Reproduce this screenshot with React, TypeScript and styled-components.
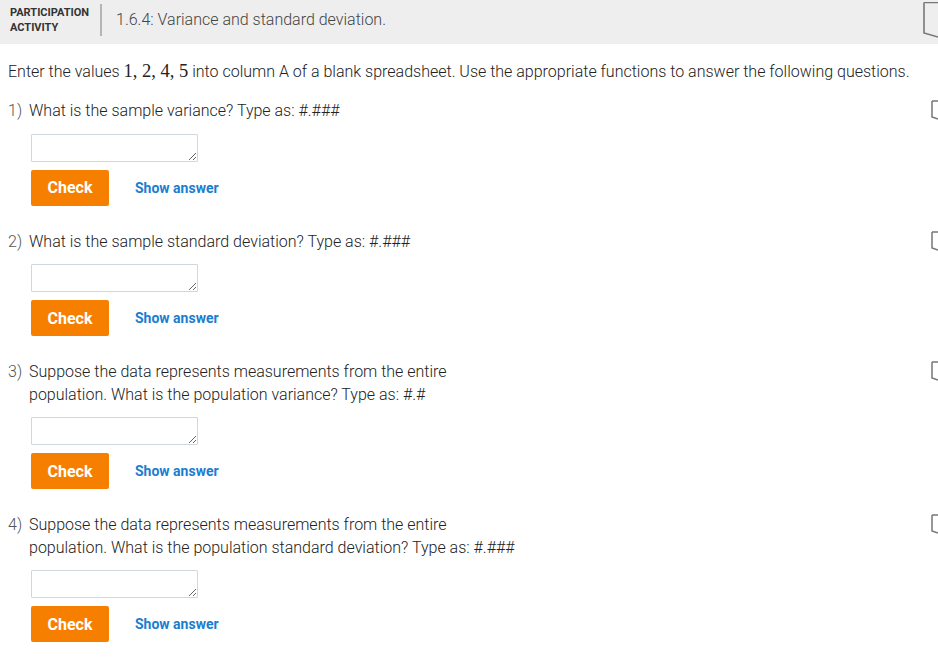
import React from "react";
import styled, { createGlobalStyle } from "styled-components";

const Global = createGlobalStyle`
  html, body { margin: 0; padding: 0; background: #fff; overflow: hidden; }
  body { font-family: Roboto, "Liberation Sans", sans-serif; }
`;

const Page = styled.div`
  width: 938px;
  overflow: hidden;
`;

const Header = styled.div`
  height: 44px;
  background: #eeeeee;
  display: flex;
  align-items: flex-start;
  box-sizing: border-box;
  padding-top: 4px;
`;

const Label = styled.div`
  font-weight: 700;
  font-size: 11px;
  line-height: 15px;
  color: #333;
  text-transform: uppercase;
  padding-left: 10px;
  width: 80px;
  padding-top: 1px;
`;

const Divider = styled.div`
  width: 2px;
  height: 32px;
  background: #b5b5b5;
  margin-left: 10px;
  margin-right: 14px;
`;

const Title = styled.div`
  font-weight: 300;
  font-size: 16px;
  color: #444;
  line-height: 20px;
  padding-top: 6px;
  flex: 1;
`;

const HeaderIcon = styled.svg`
  display: block;
  margin-top: -2px;
`;

const Body = styled.div`
  padding: 16px 0 0 8px;
  font-weight: 300;
  font-size: 16px;
  color: #222;
`;

const Intro = styled.p`
  margin: 0 0 17px 0;
  line-height: 22px;
`;

const Math = styled.span`
  font-family: "Liberation Serif", "Times New Roman", serif;
  font-weight: 400;
  font-size: 18.5px;
  color: #222;
`;

const Question = styled.div`
  display: flex;
  align-items: flex-start;
  margin-bottom: 25px;
`;

const Num = styled.div`
  width: 21px;
  color: #555;
  line-height: 22.5px;
`;

const QMain = styled.div`
  flex: 1;
`;

const Prompt = styled.div`
  line-height: 22.5px;
  max-width: 492px;
`;

const Answer = styled.textarea`
  display: block;
  box-sizing: border-box;
  width: 167px;
  height: 28px;
  margin: 11px 0 0 2px;
  border: 1px solid #cfd8de;
  border-radius: 1px;
  resize: vertical;
  font: inherit;
`;

const Actions = styled.div`
  display: flex;
  align-items: center;
  margin: 8px 0 0 2px;
`;

const CheckBtn = styled.button`
  width: 78px;
  height: 36px;
  border: none;
  border-radius: 2px;
  background: #f77f00;
  color: #fff;
  font-family: Roboto, "Liberation Sans", sans-serif;
  font-weight: 700;
  font-size: 16px;
  padding: 0;
`;

const ShowAnswer = styled.button`
  background: none;
  border: none;
  padding: 0;
  margin-left: 26px;
  color: #1a7dcf;
  font-family: Roboto, "Liberation Sans", sans-serif;
  font-weight: 700;
  font-size: 14px;
`;

const StatusIcon = styled.svg`
  display: block;
  flex: none;
  margin-top: 0px;
`;

const questions = [
  "What is the sample variance? Type as: #.###",
  "What is the sample standard deviation? Type as: #.###",
  "Suppose the data represents measurements from the entire population. What is the population variance? Type as: #.#",
  "Suppose the data represents measurements from the entire population. What is the population standard deviation? Type as: #.###",
];

export default function App() {
  return (
    <Page>
      <Global />
      <Header>
        <Label>
          Participation
          <br />
          Activity
        </Label>
        <Divider />
        <Title>1.6.4: Variance and standard deviation.</Title>
        <HeaderIcon width="15" height="40" viewBox="0 0 15 40">
          <path d="M1 0.5 H15 M1 0.5 V31 L15 35" fill="none" stroke="#777" strokeWidth="1.6" />
        </HeaderIcon>
      </Header>
      <Body>
        <Intro>
          Enter the values <Math>1, 2, 4, 5</Math> into column A of a blank spreadsheet. Use the
          appropriate functions to answer the following questions.
        </Intro>
        {questions.map((q, i) => (
          <Question key={i}>
            <Num>{i + 1})</Num>
            <QMain>
              <Prompt>{q}</Prompt>
              <Answer />
              <Actions>
                <CheckBtn>Check</CheckBtn>
                <ShowAnswer>Show answer</ShowAnswer>
              </Actions>
            </QMain>
            <StatusIcon width="7" height="20" viewBox="0 0 7 20">
              <path d="M1 1 H7 M1 1 V17 L7 19" fill="none" stroke="#777" strokeWidth="1.5" />
            </StatusIcon>
          </Question>
        ))}
      </Body>
    </Page>
  );
}
